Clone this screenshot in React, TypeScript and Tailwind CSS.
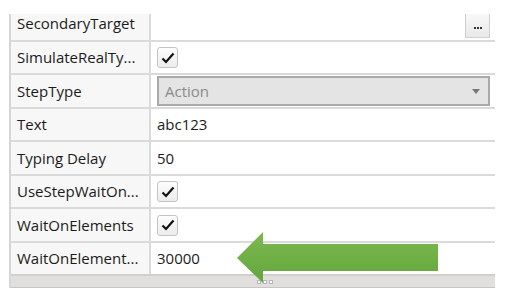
const font = { fontFamily: '"Open Sans", "Noto Sans", sans-serif' };

function CheckBox() {
  return (
    <div className="w-[21px] h-[21px] rounded-[3px] border border-[#c4c4c4] bg-gradient-to-b from-[#fdfdfd] to-[#ececec] flex items-center justify-center">
      <svg width="14" height="12" viewBox="0 0 14 12">
        <path d="M1.5 6.5 L5 10 L12.5 1.5" fill="none" stroke="#111" strokeWidth="2.2" />
      </svg>
    </div>
  );
}

type Row = { label: string; h: string; kind: "text" | "check" | "select" | "browse"; value?: string };

const rows: Row[] = [
  { label: "SecondaryTarget", h: "h-[28px]", kind: "browse" },
  { label: "SimulateRealTy...", h: "h-[33px]", kind: "check" },
  { label: "StepType", h: "h-[34px]", kind: "select", value: "Action" },
  { label: "Text", h: "h-[33px]", kind: "text", value: "abc123" },
  { label: "Typing Delay", h: "h-[34px]", kind: "text", value: "50" },
  { label: "UseStepWaitOn...", h: "h-[33px]", kind: "check" },
  { label: "WaitOnElements", h: "h-[34px]", kind: "check" },
  { label: "WaitOnElement...", h: "h-[31px]", kind: "text", value: "30000" },
];

export default function App() {
  return (
    <div className="relative w-[523px] h-[300px] bg-white overflow-hidden" style={font}>
      <div className="ml-[9px] mt-[14px] w-[486px] border-l-2 border-[#d6d6d6] overflow-hidden">
        {rows.map((r, i) => (
          <div
            key={r.label}
            className={`flex ${r.h} ${i < rows.length - 1 ? "border-b-2 border-[#dadada]" : ""}`}
          >
            <div className="w-[140px] shrink-0 bg-[#f7f7f7] border-r-2 border-[#dadada] flex items-center pl-[6px] text-[15px] text-[#1b1b1b] whitespace-nowrap overflow-hidden">
              <span className={i === 0 ? "-mt-[8px]" : ""}>{r.label}</span>
            </div>
            <div className="flex-1 flex items-center pl-[6px] pr-[5px] text-[15px] text-[#1b1b1b]">
              {r.kind === "text" && <span>{r.value}</span>}
              {r.kind === "check" && <CheckBox />}
              {r.kind === "browse" && (
                <div className="ml-auto self-start w-[25px] h-[24px] border border-t-0 border-[#cfcfcf] bg-gradient-to-b from-[#f8f8f8] to-[#e9e9e9] flex items-center justify-center gap-[1px] pt-[4px]">
                  <span className="w-[2px] h-[2px] bg-[#333]" />
                  <span className="w-[2px] h-[2px] bg-[#333]" />
                  <span className="w-[2px] h-[2px] bg-[#333]" />
                </div>
              )}
              {r.kind === "select" && (
                <div className="w-full h-[30px] border-2 border-[#a9a9a9] bg-[#e4e4e4] flex items-center justify-between pl-[6px] pr-[8px] text-[#8a8a8a]">
                  <span>{r.value}</span>
                  <svg width="8" height="5" viewBox="0 0 8 5">
                    <path d="M0 0 H8 L4 5 Z" fill="#777" />
                  </svg>
                </div>
              )}
            </div>
          </div>
        ))}
        <div className="h-[14px] bg-[#e1dfdd] border-t-2 border-[#cfcfcf] border-b border-b-[#c8c6c4] flex justify-center items-center gap-[2px] pl-[24px]">
          <span className="w-[4px] h-[4px] border border-[#b5b5b5] bg-white" />
          <span className="w-[4px] h-[4px] border border-[#b5b5b5] bg-white" />
          <span className="w-[4px] h-[4px] border border-[#b5b5b5] bg-white" />
        </div>
      </div>

      <svg className="absolute left-0 top-0" width="523" height="300" viewBox="0 0 523 300">
        <defs>
          <linearGradient id="g" x1="0" y1="0" x2="0" y2="1">
            <stop offset="0" stopColor="#7cb94f" />
            <stop offset="1" stopColor="#62a63e" />
          </linearGradient>
        </defs>
        <polygon points="237,258 263,232 263,244 438,244 438,271 263,271 263,283" fill="url(#g)" />
      </svg>
    </div>
  );
}
